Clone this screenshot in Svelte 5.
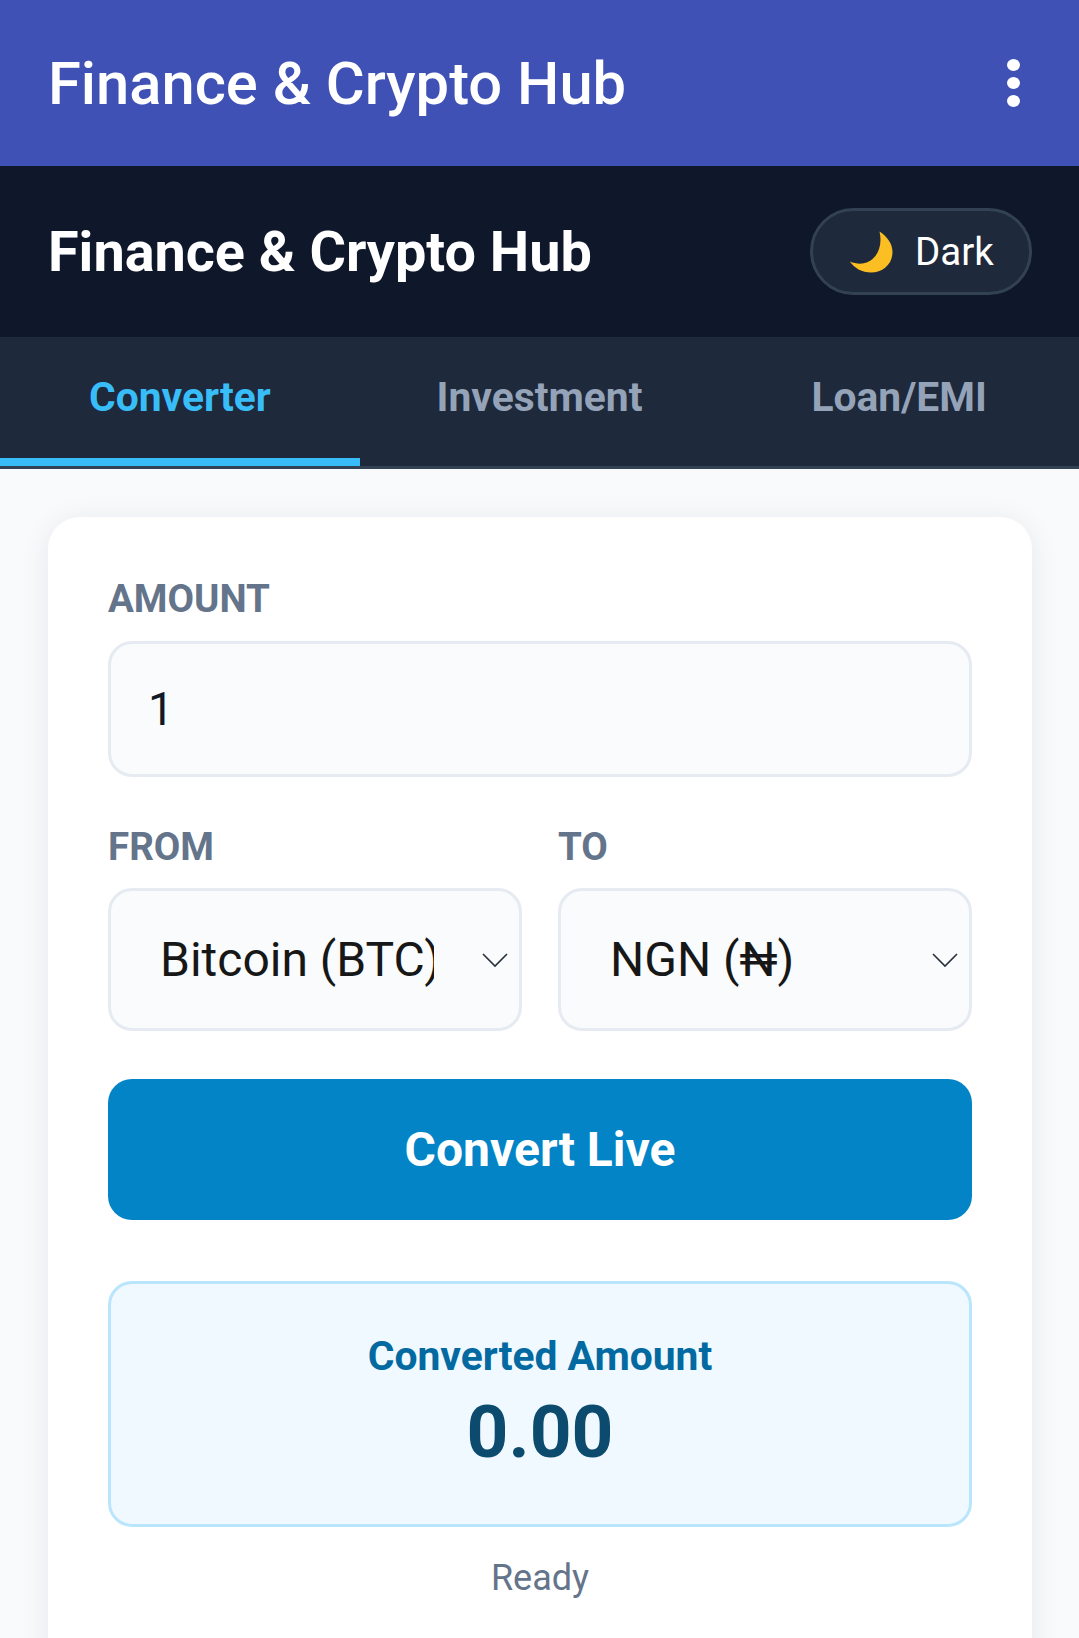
<script lang="ts">
  let amount = $state('1');
  let from = $state('btc');
  let to = $state('ngn');
  let active = $state('Converter');

  const tabs = ['Converter', 'Investment', 'Loan/EMI'];
</script>

<div class="page">
  <div class="appbar">
    <span class="appbar-title">Finance &amp; Crypto Hub</span>
    <span class="dots" aria-hidden="true"><i></i><i></i><i></i></span>
  </div>

  <header class="header">
    <h1>Finance &amp; Crypto Hub</h1>
    <button type="button" class="theme">
      <svg viewBox="0 0 44 44" width="44" height="44" aria-hidden="true">
        <path d="M30.5 1.5C38.5 7 43.5 13.5 43.5 22C43.5 34.500 33.500 42.500 22 42.500C13 42.500 6 38.500 0.800 31.500C5 33.300 9.500 34 13.500 33.500C26 32 34.500 18 30.500 1.500Z" fill="#fbbf24" />
      </svg>
      <span>Dark</span>
    </button>
  </header>

  <nav class="tabs">
    {#each tabs as tab}
      <button type="button" class="tab" class:active={active === tab} onclick={() => (active = tab)}>{tab}</button>
    {/each}
  </nav>

  <main class="content">
    <section class="card">
      <label class="field">
        <span class="label">AMOUNT</span>
        <input type="text" bind:value={amount} />
      </label>

      <div class="pair">
        <label class="field">
          <span class="label">FROM</span>
          <span class="select-wrap">
            <select bind:value={from}>
              <option value="btc">Bitcoin (BTC)</option>
              <option value="eth">Ethereum (ETH)</option>
            </select>
            <svg class="chevron" viewBox="0 0 26 16" width="26" height="16" aria-hidden="true">
              <path d="M1 2L13 14L25 2" fill="none" stroke="#27303c" stroke-width="1.6" />
            </svg>
          </span>
        </label>
        <label class="field">
          <span class="label">TO</span>
          <span class="select-wrap">
            <select bind:value={to}>
              <option value="ngn">NGN (₦)</option>
              <option value="usd">USD ($)</option>
            </select>
            <svg class="chevron" viewBox="0 0 26 16" width="26" height="16" aria-hidden="true">
              <path d="M1 2L13 14L25 2" fill="none" stroke="#27303c" stroke-width="1.6" />
            </svg>
          </span>
        </label>
      </div>

      <button type="button" class="convert">Convert Live</button>

      <div class="result">
        <div class="result-label">Converted Amount</div>
        <div class="result-value">0.00</div>
      </div>

      <p class="status">Ready</p>
    </section>
  </main>
</div>

<style>
  :global(body) {
    margin: 0;
    background: #f1f5f9;
  }

  .page {
    height: 1638px;
    overflow: hidden;
    display: flex;
    flex-direction: column;
    font-family: Roboto, "Noto Sans", sans-serif;
  }

  .appbar {
    height: 166px;
    flex: none;
    display: flex;
    align-items: center;
    justify-content: space-between;
    padding: 0 59px 0 48px;
    background: #3f51b5;
    color: #fff;
    box-sizing: border-box;
  }

  .appbar-title {
    font-size: 59.7px;
    font-weight: 500;
    margin-top: 2px;
  }

  .dots {
    display: flex;
    flex-direction: column;
    gap: 6px;
    margin-top: -1px;
  }

  .dots i {
    display: block;
    width: 13px;
    height: 12px;
    border-radius: 50%;
    background: #fff;
  }

  .header {
    height: 171px;
    flex: none;
    display: flex;
    align-items: center;
    justify-content: space-between;
    padding: 0 47px 0 48px;
    background: #0f172a;
    box-sizing: border-box;
  }

  h1 {
    margin: 0;
    font-size: 55.8px;
    font-weight: 700;
    color: #fff;
  }

  .theme {
    display: flex;
    align-items: center;
    gap: 22px;
    width: 222px;
    height: 87px;
    padding: 0 0 0 36px;
    box-sizing: border-box;
    border: 3px solid #334155;
    border-radius: 44px;
    background: #1e293b;
    color: #fff;
    font: 400 38.5px Roboto, sans-serif;
  }

  .tabs {
    height: 132px;
    flex: none;
    display: grid;
    grid-template-columns: repeat(3, 1fr);
    background: #1e293b;
    border-bottom: 3px solid #334155;
    box-sizing: border-box;
  }

  .tab {
    border: none;
    border-bottom: 8px solid transparent;
    background: transparent;
    color: #94a3b8;
    font: 700 40.8px Roboto, sans-serif;
    padding: 0 0 2px;
  }

  .tab.active {
    color: #38bdf8;
    border-bottom-color: #38bdf8;
  }

  .content {
    flex: 1;
    padding: 48px 47px 0 48px;
    background: #f8fafc;
  }

  .card {
    background: #fff;
    border-radius: 32px;
    padding: 60px 60px 0;
    height: 1200px;
    box-sizing: border-box;
    box-shadow: 0 4px 30px rgba(15, 23, 42, 0.08);
  }

  .field {
    display: block;
    min-width: 0;
  }

  .label {
    display: block;
    font-size: 38.5px;
    line-height: 44px;
    font-weight: 700;
    color: #64748b;
    margin-bottom: 20px;
  }

  input {
    display: block;
    width: 100%;
    height: 136px;
    box-sizing: border-box;
    padding: 0 37px;
    border: 3px solid #e6ebf2;
    border-radius: 24px;
    background: #f9fbfd;
    color: #111827;
    font: 400 46px Roboto, sans-serif;
    outline: none;
  }

  .pair {
    display: grid;
    grid-template-columns: 1fr 1fr;
    gap: 36px;
    margin-top: 48px;
  }

  .pair .label {
    margin-bottom: 19px;
  }

  .select-wrap {
    display: block;
    position: relative;
  }

  select {
    display: block;
    width: 100%;
    height: 143px;
    box-sizing: border-box;
    padding: 0 85px 0 49px;
    appearance: none;
    border: 3px solid #e6ebf2;
    border-radius: 24px;
    background: #f9fbfd;
    color: #171717;
    font: 400 48px Roboto, "DejaVu Sans", sans-serif;
    outline: none;
  }

  .chevron {
    position: absolute;
    right: 14px;
    top: 64px;
  }

  .convert {
    display: block;
    width: 100%;
    height: 141px;
    margin-top: 48px;
    border: none;
    border-radius: 24px;
    background: #0284c7;
    color: #fff;
    font: 700 48px Roboto, sans-serif;
  }

  .result {
    margin-top: 61px;
    height: 246px;
    box-sizing: border-box;
    border: 3px solid #bae6fd;
    border-radius: 24px;
    background: #f0f9ff;
    text-align: center;
    padding-top: 49px;
  }

  .result-label {
    font-size: 40.8px;
    line-height: 46px;
    font-weight: 700;
    color: #0369a1;
  }

  .result-value {
    font-size: 73px;
    line-height: 80px;
    font-weight: 700;
    color: #0c4a6e;
    margin-top: 13px;
  }

  .status {
    margin: 30px 0 0;
    text-align: center;
    font-size: 36px;
    line-height: 42px;
    color: #64748b;
  }
</style>
